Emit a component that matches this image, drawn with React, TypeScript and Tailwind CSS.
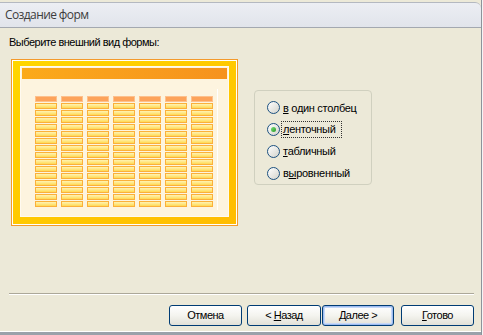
import React from "react";

const COLS = 7;
const ROWS = 15;

const Radio = ({ checked }: { checked: boolean }) => (
  <span className="flex h-[13px] w-[13px] shrink-0 items-center justify-center rounded-full border border-[#1c5180] bg-linear-to-br from-[#ffffff] to-[#d4d4cc]">
    {checked && (
      <span className="h-[5px] w-[5px] rounded-full bg-linear-to-br from-[#7be07a] to-[#1f9a1f]"></span>
    )}
  </span>
);

const Preview = () => (
  <div className="h-[167px] w-[227px] shrink-0 border border-[#f39a2c] bg-[#ffffff] p-[1px]">
    <div className="h-full w-full bg-linear-to-br from-[#ffd600] to-[#ffbc00] px-[7px] pt-[5px] pb-[7px]">
      <div className="relative flex h-full w-full flex-col border border-[#fffaf0] bg-[#fdf4df] p-[1px]">
        <div className="h-[11px] w-full bg-linear-to-r from-[#fbaa1a] to-[#f6921e]"></div>
        <div className="absolute top-[22px] left-[196px] h-[121px] w-[1px] bg-[#ffffff]"></div>
        <div className="mt-[17px] ml-[13px] grid w-[178px] grid-cols-7 gap-x-[4px] gap-y-[1px]">
          {Array.from({ length: COLS }).map((_, i) => (
            <div key={"h" + i} className="h-[6px] border border-[#fdc08c] bg-[#fda35a]"></div>
          ))}
          {Array.from({ length: COLS * ROWS }).map((_, i) => (
            <div
              key={i}
              className="h-[6px] border border-[#fbb03a] bg-linear-to-b from-[#fff3b0] to-[#ffd94e]"
            ></div>
          ))}
        </div>
      </div>
    </div>
  </div>
);

const Button = ({
  children,
  isDefault,
  width,
}: {
  children: React.ReactNode;
  isDefault?: boolean;
  width: string;
}) => (
  <div
    className={`flex h-[21px] ${width} items-center justify-center rounded-[3px] border border-[#003c74] bg-linear-to-b from-[#ffffff] via-[#f4f4ef] to-[#e2e1d8] text-[11px] leading-none tracking-[-0.5px] text-black ${
      isDefault ? "shadow-[inset_0_0_0_1px_#9dbcf0,inset_0_0_0_2px_#c6d8f7]" : ""
    }`}
  >
    <span>{children}</span>
  </div>
);

const OPTIONS = [
  { label: <><u>в</u> один столбец</>, checked: false },
  { label: <><u>л</u>енточный</>, checked: true },
  { label: <><u>т</u>абличный</>, checked: false },
  { label: <>в<u>ы</u>ровненный</>, checked: false },
];

export default function App() {
  return (
    <div className="h-[335px] w-[483px] overflow-hidden bg-[#f4f4f4] font-['Liberation_Sans',sans-serif]">
      <div className="flex h-full w-[482px] flex-col border-r border-[#8d939b] bg-[#ece9d8]">
        {/* title bar */}
        <div className="mt-[2px] flex h-[26px] items-center rounded-tr-[6px] border-t border-b border-t-[#b4b8c0] border-b-[#a3a8b0] bg-linear-to-b from-[#eceef3] to-[#e1e4eb] pl-[5px]">
          <span className="font-['Open_Sans',sans-serif] text-[12px] tracking-[-0.6px] text-[#3d3d3d]">
            Создание форм
          </span>
        </div>

        {/* body */}
        <div className="flex flex-1 flex-col">
          <div className="pt-[8px] pl-[9px] text-[11px] leading-[13px] tracking-[-0.5px] text-black">
            Выберите внешний вид формы:
          </div>
          <div className="mt-[10px] flex pl-[11px]">
            <Preview />
            <div className="mt-[31px] ml-[16px] flex h-[95px] w-[118px] flex-col rounded-[4px] border border-[#d0d0bf] pt-[6px] pl-[12px]">
              {OPTIONS.map((o, i) => (
                <div key={i} className="flex h-[22px] items-center">
                  <Radio checked={o.checked} />
                  <div
                    className={`ml-[1px] flex h-[17px] items-center pl-[1px] text-[11px] tracking-[-0.3px] text-black ${
                      o.checked
                        ? "w-[61px] border border-dotted border-[#333]"
                        : "border border-transparent"
                    }`}
                  >
                    <span>{o.label}</span>
                  </div>
                </div>
              ))}
            </div>
          </div>

          <div className="flex-1"></div>

          <div className="mr-[7px] ml-[9px] h-[2px] border-t border-b border-t-[#aca899] border-b-[#ffffff]"></div>

          <div className="mt-[10px] mb-[5px] flex justify-end pr-[7px]">
            <Button width="w-[73px]">Отмена</Button>
            <div className="ml-[5px]">
              <Button width="w-[74px]">
                &lt; <u>Н</u>азад
              </Button>
            </div>
            <div className="ml-[1px]">
              <Button width="w-[72px]" isDefault>
                <u>Д</u>алее &gt;
              </Button>
            </div>
            <div className="ml-[7px]">
              <Button width="w-[73px]">
                <u>Г</u>отово
              </Button>
            </div>
          </div>
        </div>

        <div className="h-[4px] border-t border-[#ffffff] bg-[#9aa1aa]"></div>
      </div>
    </div>
  );
}
